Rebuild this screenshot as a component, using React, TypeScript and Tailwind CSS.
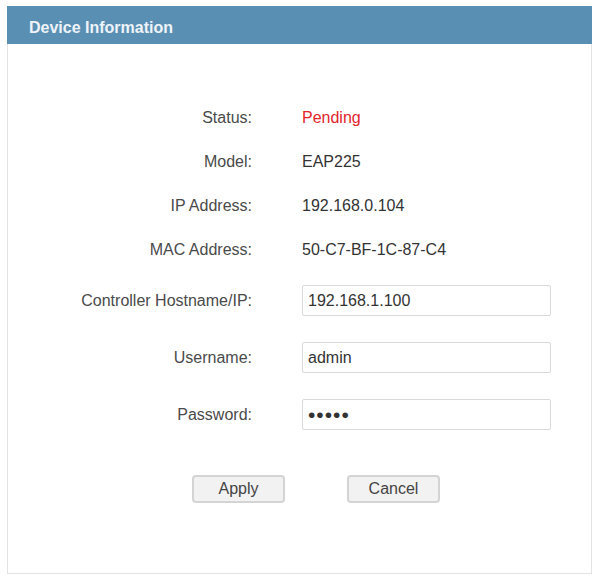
import React from 'react';

const infoRows = [
  { label: 'Status:', value: 'Pending', red: true },
  { label: 'Model:', value: 'EAP225' },
  { label: 'IP Address:', value: '192.168.0.104' },
  { label: 'MAC Address:', value: '50-C7-BF-1C-87-C4' },
];

const inputRows = [
  { label: 'Controller Hostname/IP:', value: '192.168.1.100', type: 'text' },
  { label: 'Username:', value: 'admin', type: 'text' },
  { label: 'Password:', value: 'admin', type: 'password' },
];

const App = () => {
  return (
    <div
      className="w-[593px] h-[576px] bg-white pt-[6px] pl-[7px] pr-[1px]"
      style={{ fontFamily: '"Liberation Sans", Arial, sans-serif' }}
    >
      <div className="flex flex-col h-[568px]">
        {/* Header */}
        <div className="h-[38px] bg-[#5a8fb4] flex items-center pl-[22px] pt-[6px]">
          <span className="text-[16px] font-bold text-[#eef4f8]">Device Information</span>
        </div>

        {/* Body */}
        <div className="flex-1 border-x border-b border-[#e3e3e3] pt-[52px]">
          {infoRows.map((row) => (
            <div key={row.label} className="flex items-center h-[44px] text-[16px]">
              <div className="w-[244px] text-right text-[#4a4a4a]">{row.label}</div>
              <div className={`ml-[50px] ${row.red ? 'text-[#e3242b]' : 'text-[#333]'}`}>
                {row.value}
              </div>
            </div>
          ))}

          <div>
            {inputRows.map((row) => (
              <div key={row.label} className="flex items-center h-[57px] text-[16px]">
                <div className="w-[244px] text-right text-[#4a4a4a]">{row.label}</div>
                <input
                  type={row.type}
                  defaultValue={row.value}
                  className={`ml-[50px] w-[249px] h-[31px] border border-[#d9d9d9] rounded-[2px] px-[5px] text-[#333] outline-none ${
                    row.type === 'password' ? 'text-[21px] tracking-[1px]' : 'text-[16px]'
                  }`}
                  style={{ fontFamily: '"Liberation Sans", Arial, sans-serif' }}
                />
              </div>
            ))}
          </div>

          {/* Buttons */}
          <div className="flex gap-[62px] pl-[184px] mt-[32px]">
            <button className="w-[93px] h-[28px] bg-[#f2f2f2] border-2 border-[#d4d4d4] rounded-[4px] text-[16px] text-[#444]">
              Apply
            </button>
            <button className="w-[93px] h-[28px] bg-[#f2f2f2] border-2 border-[#d4d4d4] rounded-[4px] text-[16px] text-[#444]">
              Cancel
            </button>
          </div>
        </div>
      </div>
    </div>
  );
};

export default App;
